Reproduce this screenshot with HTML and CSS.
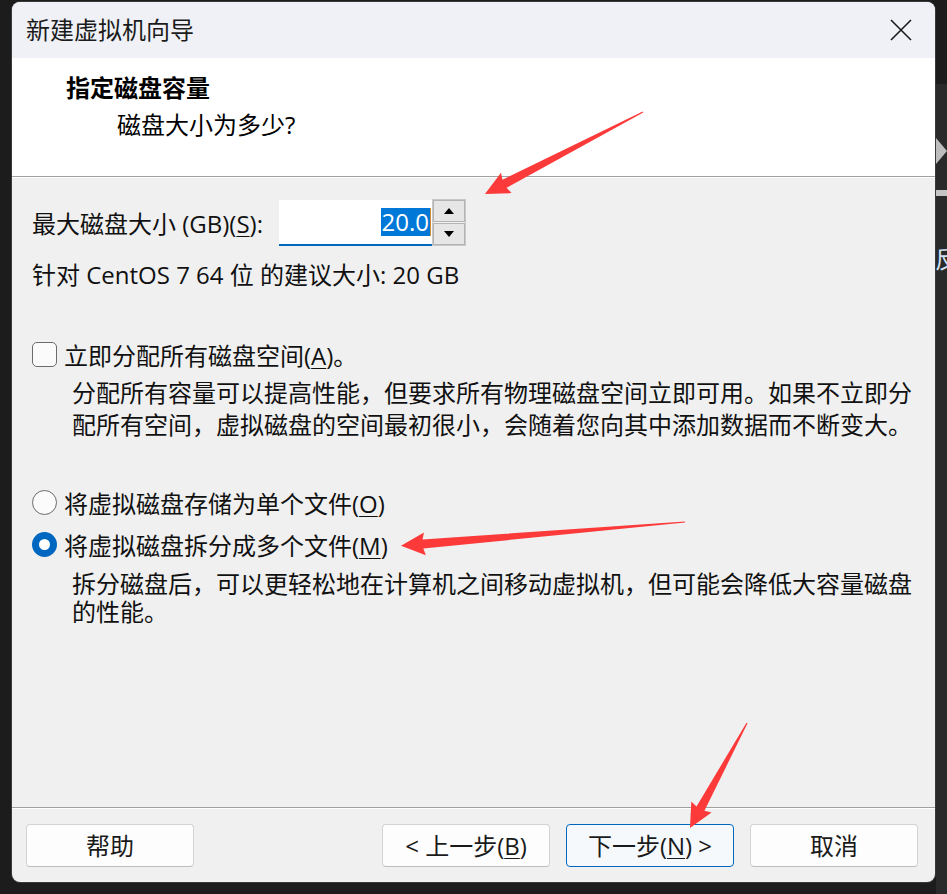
FILE: index.html
```html
<!DOCTYPE html>
<html lang="zh-CN">
<head>
<meta charset="utf-8">
<title>新建虚拟机向导</title>
<link rel="stylesheet" href="styles.css">
</head>
<body>
<div class="desk">
  <div class="window">
    <div class="titlebar">
      <span class="title">新建虚拟机向导</span>
      <span class="close">
        <svg width="22" height="22" viewBox="0 0 22 22"><path d="M1 1 L21 21 M21 1 L1 21" stroke="#1b1b1b" stroke-width="1.6" fill="none"/></svg>
      </span>
    </div>
    <div class="header">
      <div class="h-title">指定磁盘容量</div>
      <div class="h-sub">磁盘大小为多少?</div>
    </div>
    <div class="content">
      <div class="size-row">
        <span class="size-label">最大磁盘大小 (GB)(<u>S</u>):</span>
        <div class="spin-input"><span class="sel">20.0</span><span class="caret"></span></div>
        <div class="spin-btns">
          <span class="sb"><svg width="10" height="6" viewBox="0 0 10 6"><path d="M0 6 L5 0 L10 6 Z" fill="#000"/></svg></span>
          <span class="sb"><svg width="10" height="6" viewBox="0 0 10 6"><path d="M0 0 L5 6 L10 0 Z" fill="#000"/></svg></span>
        </div>
      </div>
      <div class="rec">针对 CentOS 7 64 位 的建议大小: 20 GB</div>
      <div class="opt check-row"><span class="checkbox"></span><span>立即分配所有磁盘空间(<u>A</u>)。</span></div>
      <p class="desc d1">分配所有容量可以提高性能，但要求所有物理磁盘空间立即可用。如果不立即分配所有空间，虚拟磁盘的空间最初很小，会随着您向其中添加数据而不断变大。</p>
      <div class="opt r1"><span class="radio"></span><span>将虚拟磁盘存储为单个文件(<u>O</u>)</span></div>
      <div class="opt r2"><span class="radio on"></span><span>将虚拟磁盘拆分成多个文件(<u>M</u>)</span></div>
      <p class="desc d2">拆分磁盘后，可以更轻松地在计算机之间移动虚拟机，但可能会降低大容量磁盘的性能。</p>
    </div>
    <div class="footer">
      <button class="btn">帮助</button>
      <span class="spacer"></span>
      <button class="btn">&lt; 上一步(<u>B</u>)</button>
      <button class="btn primary">下一步(<u>N</u>) &gt;</button>
      <button class="btn">取消</button>
    </div>
  </div>

  <span class="bg-strip"></span>
  <span class="bg-tri"></span>
  <span class="bg-bar"></span>
  <span class="bg-char">反</span>

  <svg class="arrows" width="947" height="894" viewBox="0 0 947 894">
    <g fill="#fd3a3a">
      <polygon transform="translate(643 112) rotate(152.6)" points="0,-0.6 156,-4.5 154,-11.5 178,0 154,11.5 156,4.5 0,0.6"/>
      <polygon transform="translate(685 522) rotate(175.2)" points="0,-0.6 263,-4.5 261,-11.5 285,0 261,11.5 263,4.5 0,0.6"/>
      <polygon transform="translate(747 723) rotate(118.5)" points="0,-0.6 97.5,-4.5 95.5,-11.5 119.5,0 95.5,11.5 97.5,4.5 0,0.6"/>
    </g>
  </svg>
</div>
</body>
</html>
```

FILE: styles.css
```css
html, body {
  margin: 0;
  padding: 0;
}

body {
  width: 947px;
  height: 894px;
  overflow: hidden;
  background: #1c1c1c;
  font-family: "Open Sans", "Noto Sans CJK SC", sans-serif;
  font-size: 24px;
  color: #111;
}

.desk {
  position: relative;
  width: 947px;
  height: 894px;
  padding: 2px 0 0 12px;
  box-sizing: border-box;
}

.window {
  position: relative;
  z-index: 1;
  width: 923px;
  height: 880px;
  border-radius: 8px;
  overflow: hidden;
  background: #f0f0f0;
  display: flex;
  flex-direction: column;
  box-shadow: 0 0 0 1px #3a3a3a;
}

/* title bar */
.titlebar {
  height: 56px;
  flex: none;
  background: #eff1f6;
  display: flex;
  align-items: center;
  justify-content: space-between;
  padding: 0 23px 0 14px;
}

.title {
  font-size: 24px;
  line-height: 32px;
  color: #1b1b1b;
}

.close {
  display: flex;
  width: 22px;
  height: 22px;
}

/* header */
.header {
  height: 119px;
  flex: none;
  box-sizing: border-box;
  background: #fff;
  border-bottom: 1px solid #a0a0a0;
  padding: 14px 0 0 54px;
}

.h-title {
  font-weight: bold;
  line-height: 32px;
  color: #000;
}

.h-sub {
  margin-top: 5px;
  padding-left: 51px;
  line-height: 32px;
  color: #000;
}

/* content */
.content {
  flex: 1;
  border-top: 1px solid #fff;
  padding: 0 20px;
}

.size-row {
  margin-top: 21px;
  height: 47px;
  display: flex;
  align-items: flex-start;
}

.size-label {
  width: 247px;
  flex: none;
  line-height: 32px;
  margin-top: 9px;
}

.spin-input {
  width: 153px;
  height: 46px;
  margin-top: 1px;
  box-sizing: border-box;
  background: #fff;
  border-bottom: 2px solid #0067c0;
  display: flex;
  align-items: center;
  justify-content: flex-end;
  padding-right: 1px;
}

.sel {
  background: #0078d7;
  color: #fff;
  line-height: 28px;
  height: 28px;
  padding: 0 1px;
}

.caret {
  width: 1px;
  height: 28px;
  background: #d08a3a;
}

.spin-btns {
  width: 34px;
  height: 47px;
  box-sizing: border-box;
  border: 1px solid #c8c8c8;
  display: flex;
  flex-direction: column;
  gap: 1px;
}

.sb {
  flex: 1;
  border: 1px solid #b4b4b4;
  background: #e6e6e6;
  display: flex;
  align-items: center;
  justify-content: center;
}

.rec {
  margin-top: 13px;
  line-height: 32px;
}

.opt {
  display: flex;
  align-items: center;
  height: 32px;
}

.check-row {
  margin-top: 47px;
}

.checkbox {
  width: 25px;
  height: 25px;
  box-sizing: border-box;
  border: 1px solid #6b6b6b;
  border-radius: 5px;
  background: #fbfbfb;
  margin-right: 7px;
  flex: none;
}

.radio {
  width: 25px;
  height: 25px;
  box-sizing: border-box;
  border: 1px solid #6b6b6b;
  border-radius: 50%;
  background: #fbfbfb;
  margin-right: 7px;
  flex: none;
}

.radio.on {
  border: 7px solid #0067c0;
  background: #fff;
}

.desc {
  margin: 7px 0 0 40px;
  line-height: 32px;
}

.r1 {
  margin-top: 45px;
}

.r2 {
  margin-top: 10px;
}

.d2 {
  margin-top: 10px;
  line-height: 28px;
}

u {
  text-underline-offset: 3px;
  text-decoration-thickness: 1px;
}

/* footer */
.footer {
  flex: none;
  border-top: 1px solid #a0a0a0;
  box-shadow: inset 0 1px 0 #fff;
  padding: 16px 17px 15px 14px;
  display: flex;
  gap: 16px;
}

.spacer {
  flex: 1;
}

.btn {
  width: 168px;
  height: 43px;
  box-sizing: border-box;
  border: 1px solid #d3d3d3;
  border-bottom-color: #bdbdbd;
  border-radius: 4px;
  background: #fdfdfd;
  font: inherit;
  font-size: 24px;
  line-height: 32px;
  color: #1a1a1a;
  padding: 0;
}

.btn.primary {
  border-color: #0067c0;
  background: #f5f9fc;
}

/* background desktop bits on the right */
.bg-strip {
  position: absolute;
  left: 936px;
  top: 84px;
  width: 11px;
  height: 810px;
  background: #2a2a2a;
}

.bg-tri {
  position: absolute;
  left: 936px;
  top: 138px;
  width: 0;
  height: 0;
  border-top: 13px solid transparent;
  border-bottom: 13px solid transparent;
  border-left: 11px solid #bdbdbd;
}

.bg-bar {
  position: absolute;
  left: 936px;
  top: 190px;
  width: 11px;
  height: 6px;
  background: #c4c4c4;
}

.bg-char {
  position: absolute;
  left: 935px;
  top: 244px;
  font-size: 24px;
  line-height: 30px;
  color: #cfe0f5;
}

.arrows {
  position: absolute;
  left: 0;
  top: 0;
  z-index: 2;
  pointer-events: none;
}
```
